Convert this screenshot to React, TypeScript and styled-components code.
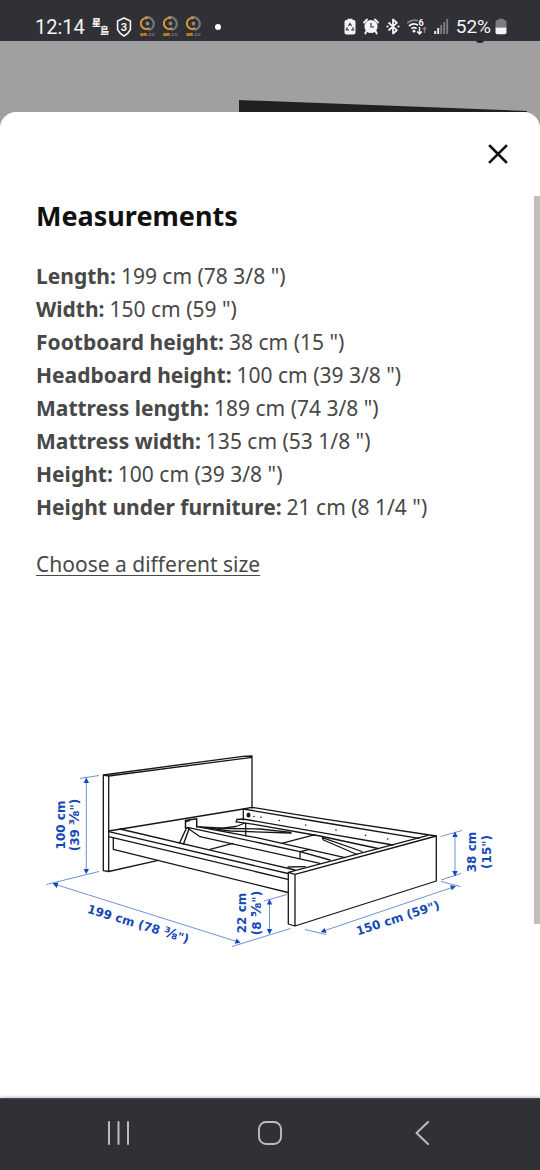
import React from "react";
import styled, { createGlobalStyle } from "styled-components";

const GlobalStyle = createGlobalStyle`
  *, *::before, *::after { box-sizing: border-box; }
  body {
    margin: 0;
    background: #ffffff;
    font-family: "Noto Sans", "Noto Sans CJK TC", sans-serif;
    color: #484848;
  }
`;

const Screen = styled.div`
  display: flex;
  flex-direction: column;
  min-height: 100vh;
`;

const StatusBar = styled.header`
  display: flex;
  align-items: center;
  justify-content: space-between;
  height: 41px;
  padding: 12px 33px 0 35px;
  background: #303136;
  color: #f4f4f4;
  font-family: Roboto, sans-serif;
  font-size: 20px;
  line-height: 28px;
`;

const StatusGroup = styled.div`
  display: flex;
  align-items: center;
  gap: 7px;
`;

const Battery = styled.span`
  display: flex;
  align-items: center;
  gap: 4px;
  font-size: 19px;
`;

const Backdrop = styled.main`
  display: flex;
  flex-direction: column;
  flex: 1;
  background: #a0a0a0;
`;

const BackdropArt = styled.svg`
  display: block;
  width: 100%;
  height: 71px;
`;

const Sheet = styled.section`
  display: flex;
  flex-direction: column;
  flex: 1;
  border-radius: 16px 16px 0 0;
  background: #ffffff;
`;

const SheetHeader = styled.div`
  display: flex;
  justify-content: flex-end;
  height: 83px;
  padding: 22px 22px 0 0;
`;

const CloseButton = styled.button`
  display: flex;
  align-items: center;
  justify-content: center;
  width: 40px;
  height: 40px;
  padding: 0;
  border: 0;
  background: none;
  color: #111111;
`;

const ScrollArea = styled.div`
  display: flex;
  flex: 1;
`;

const Content = styled.div`
  flex: 1;
  min-width: 0;
  padding: 0 30px 0 36px;
`;

const ScrollTrack = styled.div`
  display: flex;
  flex-direction: column;
  width: 6px;
  padding: 1px 0 3px;
`;

const ScrollThumb = styled.div`
  flex: 0 0 81%;
  background: #bfbfbf;
`;

const Title = styled.h1`
  margin: 0;
  color: #111111;
  font-size: 27px;
  font-weight: 700;
  line-height: 41px;
`;

const Measurements = styled.dl`
  margin: 24px 0 0;
  font-size: 21px;
  line-height: 33px;
`;

const Measurement = styled.div`
  display: flex;
  gap: 5px;
`;

const Name = styled.dt`
  font-weight: 700;
`;

const Value = styled.dd`
  margin: 0;
`;

const SizeLink = styled.a`
  display: inline-block;
  margin-top: 24px;
  color: #484848;
  font-size: 21px;
  line-height: 33px;
  text-decoration: underline;
  text-decoration-thickness: 1px;
  text-underline-offset: 3px;
`;

const Diagram = styled.svg`
  display: block;
  width: 100%;
  margin-top: 159px;
`;

const NavBar = styled.nav`
  display: grid;
  grid-template-columns: 1fr 1fr 1fr;
  justify-items: center;
  align-items: center;
  height: 72px;
  padding: 0 42px 4px;
  border-top: 1px solid #4a4b4f;
  background: #303136;
  box-shadow: 0 -1px 3px rgba(0, 0, 0, 0.25);
`;

const NavButton = styled.button`
  display: flex;
  padding: 0;
  border: 0;
  background: none;
  color: #bcbcc0;
`;

const SingTaoIcon = () => (
  <svg width="17" height="20" viewBox="0 0 17 20" overflow="visible" fill="#f4f4f4" aria-hidden="true">
    <text x="0" y="9" fontSize="9" fontWeight="900" fontFamily="'Noto Sans CJK TC', sans-serif">星</text>
    <text x="8" y="17" fontSize="9" fontWeight="900" fontFamily="'Noto Sans CJK TC', sans-serif">島</text>
  </svg>
);

const ShieldIcon = () => (
  <svg width="16" height="20" viewBox="0 0 16 20" aria-hidden="true">
    <path d="M8 1 14.400 4v8.600Q12.500 16.500 8 19 3.500 16.500 1.600 12.600V4Z" fill="none" stroke="#f4f4f4" strokeWidth="1.600" strokeLinejoin="round" />
    <text x="8" y="14" textAnchor="middle" fontSize="11" fontWeight="700" fill="#f4f4f4" fontFamily="Roboto, sans-serif">3</text>
  </svg>
);

const OnCcIcon = () => (
  <svg width="16" height="21" viewBox="0 0 16 21" aria-hidden="true">
    <path d="M6 1.300A7 6.700 0 1 1 9.500 14.300" fill="none" stroke="#77767b" strokeWidth="2.200" />
    <path d="M10.500 12A5.500 5.500 0 1 1 9 2.200" fill="none" stroke="#e0952f" strokeWidth="1.900" />
    <circle cx="8.500" cy="7.500" r="1.900" fill="#88878b" />
    <text x="1" y="20" fontSize="6" fontWeight="900" fill="#f09a2c" fontFamily="Roboto, sans-serif">
      on<tspan fill="#77767b" fontWeight="700">.cc</tspan>
    </text>
  </svg>
);

const SaverIcon = () => (
  <svg width="12" height="17" viewBox="0 0 12 17" aria-hidden="true">
    <path d="M3.500 2V.8h5V2h1.300Q11.500 2 11.500 4v10.500q0 2-2 2h-7q-2 0-2-2V4q0-2 1.700-2Z" fill="#f4f4f4" />
    <path d="M4.400 8 6 5.600 7.600 8M8.600 9.300 9.600 12H7M5 12H2.400l1-2.700" fill="none" stroke="#303136" strokeWidth="1.100" />
  </svg>
);

const AlarmIcon = () => (
  <svg width="16" height="17" viewBox="0 0 16 17" aria-hidden="true">
    <circle cx="8" cy="8.500" r="6.600" fill="#f4f4f4" />
    <path d="M1 4.500 4 1.500M15 4.500l-3-3M3.500 13 2.300 15.500M12.500 13l1.200 2.500" stroke="#f4f4f4" strokeWidth="1.800" strokeLinecap="round" />
    <path d="M8 5v4h3" fill="none" stroke="#303136" strokeWidth="1.200" />
  </svg>
);

const BluetoothIcon = () => (
  <svg width="14" height="17" viewBox="0 0 14 17" aria-hidden="true">
    <path d="m2.500 4.500 8.300 7.700L7 15.500v-14l3.800 3.300-8.300 7.700" fill="none" stroke="#f4f4f4" strokeWidth="1.800" strokeLinejoin="round" />
    <circle cx="1.500" cy="8.500" r="1.100" fill="#f4f4f4" />
    <circle cx="12.500" cy="8.500" r="1.100" fill="#f4f4f4" />
  </svg>
);

const WifiIcon = () => (
  <svg width="20" height="18" viewBox="1 0 20 18" aria-hidden="true">
    <path d="M1 5Q6.500.5 12 2.800" fill="none" stroke="#85868a" strokeWidth="1.700" />
    <path d="M3 8q4.500-4 9-.8M5.400 10.700q2.600-2 5.200 0" fill="none" stroke="#f4f4f4" strokeWidth="1.700" />
    <circle cx="8" cy="13.200" r="1.400" fill="#f4f4f4" />
    <text x="12.500" y="8" fontSize="9" fontWeight="700" fill="#f4f4f4" fontFamily="Roboto, sans-serif">6</text>
    <path d="M13.500 9v7M11.200 13.500l2.300 2.500 2.300-2.500" fill="none" stroke="#f4f4f4" strokeWidth="1.500" />
    <path d="M18.500 15V9.500M16.800 11.300l1.700-1.800 1.700 1.800" fill="none" stroke="#85868a" strokeWidth="1.300" />
  </svg>
);

const SignalIcon = () => (
  <svg width="15" height="17" viewBox="0 0 15 17" aria-hidden="true">
    <path d="M1.200 16v-3M4.200 16v-6" stroke="#f4f4f4" strokeWidth="1.900" />
    <path d="M7.200 16V7M10.200 16V4M13.200 16V1" stroke="#7c7d81" strokeWidth="1.900" />
  </svg>
);

const BatteryIcon = () => (
  <svg width="12" height="17" viewBox="0 0 12 17" aria-hidden="true">
    <path d="M3.500 2V.8h5V2h1.300Q11.500 2 11.500 4v5.500H.5V4Q.5 2 2.200 2Z" fill="#7c7d81" />
    <path d="M.5 9.500h11v5q0 1.700-1.700 1.700H2.200q-1.700 0-1.700-1.700Z" fill="#f4f4f4" />
  </svg>
);

const BedDiagram = () => (
  <Diagram viewBox="36 740 468 220" role="img" aria-label="Bed frame with its dimensions">
    <g fill="none" stroke="#161616" strokeWidth="1.300" strokeLinejoin="round" strokeLinecap="round">
      {/* headboard */}
      <path d="M103.300 775 243 756.300 252 756V808M108.700 776 252 757.300M103.300 775V870.700L108.700 871.500V776L103.300 775M108.700 871.500 158.300 860.300" />
      <path d="M108.700 831 185.500 818.500M185.500 818.500 243.300 809" />
      {/* near side rail */}
      <path d="M120 829 295 870M108.700 831.700 288 873.500M108.700 836.700 288 879.300M113.300 849.300 288 892.500M113.300 838V849.300" />
      {/* footboard */}
      <path d="M288.300 872.300 428 835.300M288.300 872.300 295 874.300 436.300 836V881L295 926 288.300 924ZM295 874.300V926" />
      {/* far side rail */}
      <path d="M243.300 809 251.700 807.300 320 818.300 436.300 836M243.300 809 320 822 419 838.300M243.300 809V820" />
      <path d="M237 819.500 243 819 320 832.300 393 845M236.500 821.800 260 825.300 320 836 378 848.500M237 819.500 236 822" />
      {/* centre beam */}
      <path d="M187.500 827.300 260 843 300 851.700M196.700 826.500 260 838.300 345 857.700M187.500 828 200 836.700 320 863.300" />
      <path d="M310 849.300 300 851.700V858.300M300 851.700 330 860" />
      {/* slat supports */}
      <path d="M200 827 230 828.500 260 829 291 832.300M218 828.700 236 826.500 245 823M245.700 824V836" />
      <path d="M208 828 230 831 291 833" />
      <path d="M210 849.300 233 843.300M281.700 843.300 315 834.700M288 867 305 866.700" />
      <path d="M322.300 837.700 362 851.500M323.500 840 357 854.500M322.300 837.700 323.500 840" />
      {/* corner bracket and leg */}
      <path d="M185.500 828V820.500L196.700 818.800V827" strokeWidth="1.500" />
      <path d="M186.500 828 179.500 843M189 829 183.500 844M186 821.500 189.500 820.500" strokeWidth="1.400" />
    </g>
    <g fill="#161616">
      <ellipse cx="248.500" cy="815" rx="2" ry="2.500" />
      <circle cx="254" cy="816.500" r=".8" />
      <circle cx="261" cy="817.300" r=".8" />
      <circle cx="279.300" cy="820.500" r=".8" />
      <circle cx="305.700" cy="825" r=".8" />
      <circle cx="336" cy="830" r=".8" />
      <circle cx="365.500" cy="835.300" r=".8" />
      <circle cx="387.700" cy="839" r=".8" />
    </g>
    <g stroke="#4c73cf" strokeWidth=".8" fill="none">
      <path d="M86.300 779V873M80 778.500 99 775.500M46.500 884.500 99 871.500M54 884 240 942.500M232 946.500 290.500 928.500" />
      <path d="M269.500 900V933M264 901 287 894.500M305 929.500 326 934.500M322 931.500 455 886.500M441 881.500 460.500 886.500" />
      <path d="M455 833V875M440.500 836.500 462 830.500M441 880 461 873.500" />
    </g>
    <g fill="#1649b8">
      <path d="M86.300 777.500 89 783H83.600ZM86.300 874 89 869H83.600Z" />
      <path d="M52.500 883.300 58.500 882.500 56.700 888ZM240.500 942.700 236.500 938.500 234.800 943.800Z" />
      <path d="M269.500 899 272.200 904.500H266.800ZM269.500 934.500 272.200 929H266.800Z" />
      <path d="M320.500 932 326.500 933 324.700 928ZM456 886 450 885.200 451.800 890.200Z" />
      <path d="M455 831.500 457.700 837H452.300ZM455 876.500 457.700 871H452.300Z" />
    </g>
    <g fill="#1649b8" fontFamily="'DejaVu Sans', sans-serif" fontWeight="700" fontSize="12" textAnchor="middle">
      <text transform="translate(65 825) rotate(-90)">100 cm</text>
      <text transform="translate(79 825) rotate(-90)">(39 <tspan fontSize="14">⅜</tspan>")</text>
      <text transform="translate(137 928) rotate(17)">199 cm (78 <tspan fontSize="14">⅜</tspan>")</text>
      <text transform="translate(246 913) rotate(-90)">22 cm</text>
      <text transform="translate(261 913) rotate(-90)">(8 <tspan fontSize="14">⅝</tspan>")</text>
      <text transform="translate(399 922) rotate(-18)">150 cm (59")</text>
      <text transform="translate(476 852) rotate(-90)">38 cm</text>
      <text transform="translate(491 852) rotate(-90)">(15")</text>
    </g>
  </Diagram>
);

const measurements: [string, string][] = [
  ["Length:", '199 cm (78 3/8 ")'],
  ["Width:", '150 cm (59 ")'],
  ["Footboard height:", '38 cm (15 ")'],
  ["Headboard height:", '100 cm (39 3/8 ")'],
  ["Mattress length:", '189 cm (74 3/8 ")'],
  ["Mattress width:", '135 cm (53 1/8 ")'],
  ["Height:", '100 cm (39 3/8 ")'],
  ["Height under furniture:", '21 cm (8 1/4 ")'],
];

export default function App() {
  return (
    <Screen>
      <GlobalStyle />
      <StatusBar>
        <StatusGroup>
          <time>12:14</time>
          <SingTaoIcon />
          <ShieldIcon />
          <OnCcIcon />
          <OnCcIcon />
          <OnCcIcon />
          <svg width="20" height="8" viewBox="0 0 20 8" aria-hidden="true">
            <circle cx="10" cy="4" r="3" fill="#ffffff" />
          </svg>
        </StatusGroup>
        <StatusGroup>
          <SaverIcon />
          <AlarmIcon />
          <BluetoothIcon />
          <WifiIcon />
          <SignalIcon />
          <Battery>
            52%
            <BatteryIcon />
          </Battery>
        </StatusGroup>
      </StatusBar>
      <Backdrop>
        <BackdropArt viewBox="0 0 540 71" preserveAspectRatio="none" aria-hidden="true">
          <path d="M476 0h8q-1 2-4 2t-4-2Z" fill="#1c1c1c" />
          <path d="M239 59 527 70V71H239Z" fill="#20201e" />
        </BackdropArt>
        <Sheet>
          <SheetHeader>
            <CloseButton aria-label="Close">
              <svg width="20" height="20" viewBox="0 0 20 20" aria-hidden="true">
                <path d="M2 2 18 18M18 2 2 18" stroke="currentColor" strokeWidth="2.600" strokeLinecap="square" />
              </svg>
            </CloseButton>
          </SheetHeader>
          <ScrollArea>
            <Content>
              <Title>Measurements</Title>
              <Measurements>
                {measurements.map(([name, value]) => (
                  <Measurement key={name}>
                    <Name>{name}</Name>
                    <Value>{value}</Value>
                  </Measurement>
                ))}
              </Measurements>
              <SizeLink href="#sizes">Choose a different size</SizeLink>
              <BedDiagram />
            </Content>
            <ScrollTrack>
              <ScrollThumb />
            </ScrollTrack>
          </ScrollArea>
        </Sheet>
      </Backdrop>
      <NavBar aria-label="System navigation">
        <NavButton aria-label="Recent apps">
          <svg width="24" height="24" viewBox="0 0 24 24" aria-hidden="true">
            <path d="M3 1v22M12.500 1v22M22 1v22" stroke="currentColor" strokeWidth="2" strokeLinecap="round" />
          </svg>
        </NavButton>
        <NavButton aria-label="Home">
          <svg width="24" height="24" viewBox="0 0 24 24" aria-hidden="true">
            <rect x="1" y="1" width="22" height="22" rx="7" fill="none" stroke="currentColor" strokeWidth="1.900" />
          </svg>
        </NavButton>
        <NavButton aria-label="Back">
          <svg width="24" height="24" viewBox="0 0 24 24" aria-hidden="true">
            <path d="M18 1 6.500 12 18 23" fill="none" stroke="currentColor" strokeWidth="2" strokeLinecap="round" strokeLinejoin="round" />
          </svg>
        </NavButton>
      </NavBar>
    </Screen>
  );
}
